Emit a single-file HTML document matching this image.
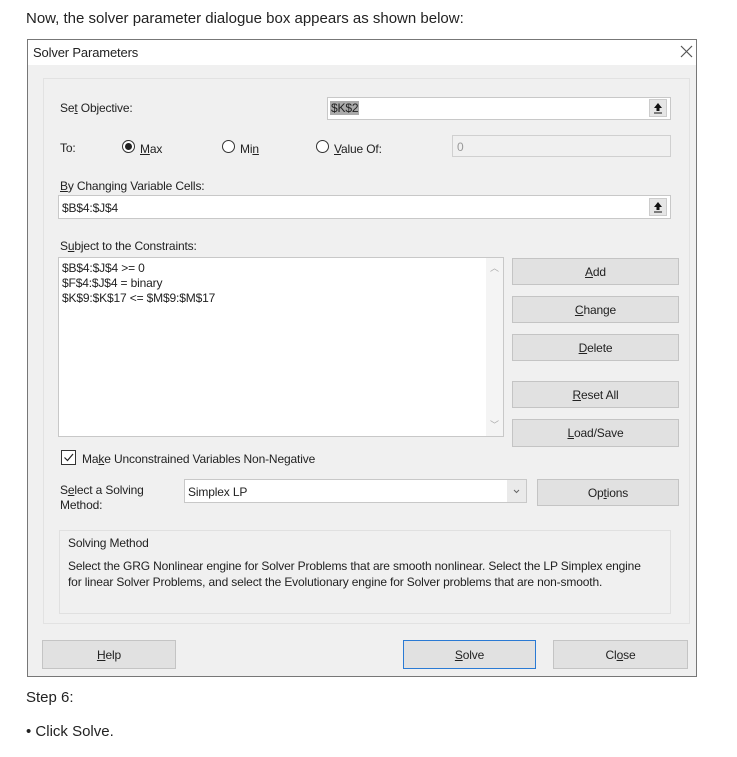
<!DOCTYPE html>
<html><head><style>
body{margin:0;width:737px;height:757px;background:#fff;position:relative;overflow:hidden;font-family:"Liberation Sans",Arial,sans-serif}
.a{position:absolute}
.t{font-size:12px;color:#222;letter-spacing:-0.15px;white-space:nowrap}
.in{position:absolute;background:#fff;border:1px solid #c8c8c8;box-sizing:border-box}
.btn{position:absolute;background:#e1e1e1;border:1px solid #c4c4c4;box-sizing:border-box;font-size:12px;letter-spacing:-0.15px;color:#222;text-align:center;display:flex;align-items:center;justify-content:center}
.rad{position:absolute;width:13px;height:13px;border:1px solid #333;border-radius:50%;background:#fff;box-sizing:border-box}
.up{position:absolute;width:18px;height:18px;background:#e6e6e6;border:1px solid #ccc;box-sizing:border-box}
</style></head><body>
<div class="a" style="left:26px;top:10px;font-size:15px;color:#222">Now, the solver parameter dialogue box appears as shown below:</div>
<div class="a" style="left:27px;top:39px;width:670px;height:638px;border:1px solid #777;box-sizing:border-box;background:#f0f0f0"></div>
<div class="a" style="left:28px;top:40px;width:668px;height:25px;background:#fff"></div>
<div class="a t" style="left:33px;top:45px;font-size:13px">Solver Parameters</div>
<svg class="a" style="left:680px;top:45px" width="13" height="13"><path d="M1 1L12 12M12 1L1 12" stroke="#555" stroke-width="1.2"/></svg>
<div class="a" style="left:43px;top:78px;width:647px;height:546px;border:1px solid #e2e2e2;box-sizing:border-box"></div>

<div class="a t" style="left:60px;top:101px">Se<u>t</u> Objective:</div>
<div class="in" style="left:327px;top:97px;width:344px;height:23px"></div>
<div class="a t" style="left:330px;top:101px;background:#aaa;padding:0 1px">$K$2</div>
<div class="up" style="left:649px;top:99px"><svg width="16" height="16"><path d="M8 3L4 8H6.5V11H9.5V8H12Z" fill="#111"/><path d="M4 13H12" stroke="#111"/></svg></div>

<div class="a t" style="left:60px;top:141px">To:</div>
<div class="rad" style="left:122px;top:140px"><div style="width:7px;height:7px;margin:2px;border-radius:50%;background:#222"></div></div>
<div class="a t" style="left:140px;top:142px"><u>M</u>ax</div>
<div class="rad" style="left:222px;top:140px"></div>
<div class="a t" style="left:240px;top:142px">Mi<u>n</u></div>
<div class="rad" style="left:316px;top:140px"></div>
<div class="a t" style="left:334px;top:142px"><u>V</u>alue Of:</div>
<div class="in" style="left:452px;top:135px;width:219px;height:22px;background:#f0f0f0;border-color:#d0d0d0"></div>
<div class="a t" style="left:457px;top:140px;color:#999">0</div>

<div class="a t" style="left:60px;top:179px"><u>B</u>y Changing Variable Cells:</div>
<div class="in" style="left:58px;top:195px;width:613px;height:24px"></div>
<div class="a t" style="left:62px;top:201px">$B$4:$J$4</div>
<div class="up" style="left:649px;top:198px"><svg width="16" height="16"><path d="M8 3L4 8H6.5V11H9.5V8H12Z" fill="#111"/><path d="M4 13H12" stroke="#111"/></svg></div>

<div class="a t" style="left:60px;top:239px">S<u>u</u>bject to the Constraints:</div>
<div class="in" style="left:58px;top:257px;width:446px;height:180px"></div>
<div class="a t" style="left:62px;top:261px;line-height:15px">$B$4:$J$4 &gt;= 0<br>$F$4:$J$4 = binary<br>$K$9:$K$17 &lt;= $M$9:$M$17</div>
<div class="a" style="left:486px;top:258px;width:17px;height:178px;background:#f4f4f4"></div>
<div class="a" style="left:490px;top:261px;font-size:9px;color:#aaa">︿</div>
<div class="a" style="left:490px;top:418px;font-size:9px;color:#aaa">﹀</div>

<div class="btn" style="left:512px;top:258px;width:167px;height:27px"><u>A</u>dd</div>
<div class="btn" style="left:512px;top:296px;width:167px;height:27px"><u>C</u>hange</div>
<div class="btn" style="left:512px;top:334px;width:167px;height:27px"><u>D</u>elete</div>
<div class="btn" style="left:512px;top:381px;width:167px;height:27px"><u>R</u>eset All</div>
<div class="btn" style="left:512px;top:419px;width:167px;height:28px"><u>L</u>oad/Save</div>

<div class="a" style="left:61px;top:450px;width:15px;height:15px;border:1px solid #333;box-sizing:border-box;background:#fff"><svg width="13" height="13"><path d="M2.5 6.5L5.5 9.5L11 3" stroke="#222" stroke-width="1.2" fill="none"/></svg></div>
<div class="a t" style="left:82px;top:452px">Ma<u>k</u>e Unconstrained Variables Non-Negative</div>

<div class="a t" style="left:60px;top:483px;line-height:15px">S<u>e</u>lect a Solving<br>Method:</div>
<div class="in" style="left:184px;top:479px;width:343px;height:24px"></div>
<div class="a t" style="left:188px;top:485px">Simplex LP</div>
<div class="a" style="left:507px;top:480px;width:19px;height:22px;background:#eaeaea"><svg width="19" height="22"><path d="M7 10L9.5 12.5L12 10" stroke="#666" fill="none"/></svg></div>
<div class="btn" style="left:537px;top:479px;width:142px;height:27px">Op<u>t</u>ions</div>

<div class="a" style="left:59px;top:530px;width:612px;height:84px;border:1px solid #e0e0e0;box-sizing:border-box"></div>
<div class="a t" style="left:68px;top:536px">Solving Method</div>
<div class="a t" style="left:68px;top:558px;line-height:16px">Select the GRG Nonlinear engine for Solver Problems that are smooth nonlinear. Select the LP Simplex engine<br>for linear Solver Problems, and select the Evolutionary engine for Solver problems that are non-smooth.</div>

<div class="btn" style="left:42px;top:640px;width:134px;height:29px"><u>H</u>elp</div>
<div class="btn" style="left:403px;top:640px;width:133px;height:29px;border:1px solid #2a7ad4"><u>S</u>olve</div>
<div class="btn" style="left:553px;top:640px;width:135px;height:29px">Cl<u>o</u>se</div>

<div class="a" style="left:26px;top:689px;font-size:15px;color:#222">Step 6:</div>
<div class="a" style="left:26px;top:723px;font-size:15px;color:#222">• Click Solve.</div>
</body></html>
